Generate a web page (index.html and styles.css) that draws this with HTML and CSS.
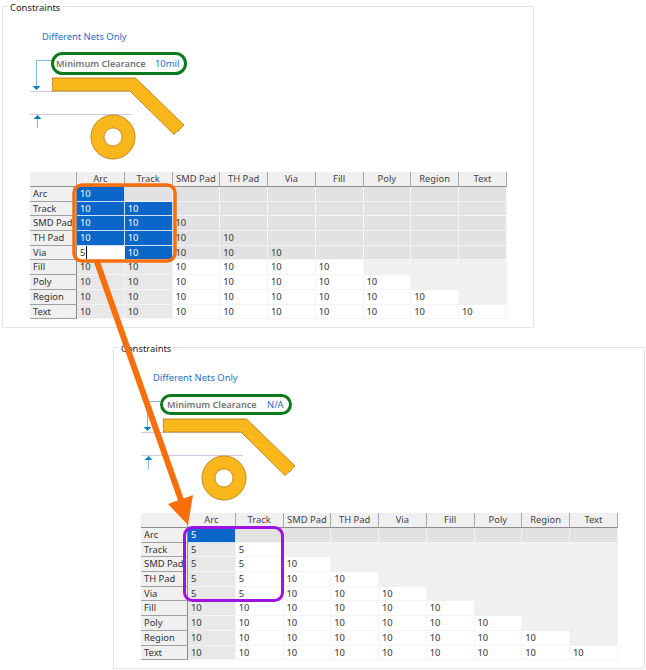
FILE: index.html
```html
<!DOCTYPE html>
<html lang="en">
<head>
    <meta charset="UTF-8">
    <title>Constraints</title>
    <link rel="stylesheet" href="styles.css">
</head>
<body>
    <svg class="defs" width="0" height="0">
        <symbol id="pcb" viewBox="30 14 170 158">
            <line class="gap" x1="30" y1="91.5" x2="131" y2="91.5"/>
            <line class="gap" x1="30" y1="114.5" x2="132" y2="114.5"/>
            <path class="lead" d="M52 60.5H36.5V87M37.5 118V128"/>
            <path class="head" d="M32.5 86H40.5L36.5 90Z M33.5 119H41.5L37.5 115Z"/>
            <path class="copper" d="M52 78H135.5L184 125L181 127.5L179.5 130L177 131.5L174 134.5L130 91H52L53 88L52 85L53 81Z"/>
            <path class="copper" fill-rule="evenodd" d="M113 115a22 22 0 1 0 .01 0Z M113 128a9 9 0 1 1 -.01 0Z"/>
        </symbol>
    </svg>

    <fieldset class="panel panel-before">
        <legend>Constraints</legend>
        <div class="panel-body">
            <svg class="diagram" width="170" height="158" viewBox="30 14 170 158">
                <use href="#pcb" x="30" y="14" width="170" height="158"/>
                <text class="nets" x="42" y="40">Different Nets Only</text>
                <text class="rule" x="56" y="66.5">Minimum Clearance</text>
                <text class="nets" x="155" y="67">10mil</text>
            </svg>
            <div class="grid">
                <div class="hd"></div><div class="hd">Arc</div><div class="hd">Track</div><div class="hd">SMD Pad</div><div class="hd">TH Pad</div><div class="hd">Via</div><div class="hd">Fill</div><div class="hd">Poly</div><div class="hd">Region</div><div class="hd">Text</div>

                <div class="rh">Arc</div><div class="c sel">10</div><div class="c dis"></div><div class="c dis"></div><div class="c dis"></div><div class="c dis"></div><div class="c dis"></div><div class="c dis"></div><div class="c dis"></div><div class="c dis"></div>
                <div class="rh">Track</div><div class="c sel">10</div><div class="c sel">10</div><div class="c dis"></div><div class="c dis"></div><div class="c dis"></div><div class="c dis"></div><div class="c dis"></div><div class="c dis"></div><div class="c dis"></div>
                <div class="rh">SMD Pad</div><div class="c sel">10</div><div class="c sel">10</div><div class="c dis">10</div><div class="c dis"></div><div class="c dis"></div><div class="c dis"></div><div class="c dis"></div><div class="c dis"></div><div class="c dis"></div>
                <div class="rh">TH Pad</div><div class="c sel">10</div><div class="c sel">10</div><div class="c dis">10</div><div class="c dis">10</div><div class="c dis"></div><div class="c dis"></div><div class="c dis"></div><div class="c dis"></div><div class="c dis"></div>
                <div class="rh">Via</div><div class="c val"><span class="caret">5</span></div><div class="c sel">10</div><div class="c dis">10</div><div class="c dis">10</div><div class="c dis">10</div><div class="c dis"></div><div class="c dis"></div><div class="c dis"></div><div class="c dis"></div>
                <div class="rh">Fill</div><div class="c ro">10</div><div class="c ro">10</div><div class="c val">10</div><div class="c val">10</div><div class="c val">10</div><div class="c val">10</div><div class="c off"></div><div class="c off"></div><div class="c off"></div>
                <div class="rh">Poly</div><div class="c ro">10</div><div class="c ro">10</div><div class="c val">10</div><div class="c val">10</div><div class="c val">10</div><div class="c val">10</div><div class="c val">10</div><div class="c off"></div><div class="c off"></div>
                <div class="rh">Region</div><div class="c ro">10</div><div class="c ro">10</div><div class="c val">10</div><div class="c val">10</div><div class="c val">10</div><div class="c val">10</div><div class="c val">10</div><div class="c val">10</div><div class="c off"></div>
                <div class="rh">Text</div><div class="c ro">10</div><div class="c ro">10</div><div class="c val">10</div><div class="c val">10</div><div class="c val">10</div><div class="c val">10</div><div class="c val">10</div><div class="c val">10</div><div class="c val">10</div>
            </div>
        </div>
    </fieldset>

    <fieldset class="panel panel-after">
        <legend>Constraints</legend>
        <div class="panel-body">
            <svg class="diagram" width="170" height="158" viewBox="30 14 170 158">
                <use href="#pcb" x="30" y="14" width="170" height="158"/>
                <text class="nets" x="42" y="40">Different Nets Only</text>
                <text class="rule" x="56" y="66.5">Minimum Clearance</text>
                <text class="nets" x="156" y="67">N/A</text>
            </svg>
            <div class="grid">
                <div class="hd"></div><div class="hd">Arc</div><div class="hd">Track</div><div class="hd">SMD Pad</div><div class="hd">TH Pad</div><div class="hd">Via</div><div class="hd">Fill</div><div class="hd">Poly</div><div class="hd">Region</div><div class="hd">Text</div>

                <div class="rh">Arc</div><div class="c sel">5</div><div class="c dis"></div><div class="c dis"></div><div class="c dis"></div><div class="c dis"></div><div class="c dis"></div><div class="c dis"></div><div class="c dis"></div><div class="c dis"></div>
                <div class="rh">Track</div><div class="c ro">5</div><div class="c val">5</div><div class="c off"></div><div class="c off"></div><div class="c off"></div><div class="c off"></div><div class="c off"></div><div class="c off"></div><div class="c off"></div>
                <div class="rh">SMD Pad</div><div class="c ro">5</div><div class="c val">5</div><div class="c val">10</div><div class="c off"></div><div class="c off"></div><div class="c off"></div><div class="c off"></div><div class="c off"></div><div class="c off"></div>
                <div class="rh">TH Pad</div><div class="c ro">5</div><div class="c val">5</div><div class="c val">10</div><div class="c val">10</div><div class="c off"></div><div class="c off"></div><div class="c off"></div><div class="c off"></div><div class="c off"></div>
                <div class="rh">Via</div><div class="c ro">5</div><div class="c val">5</div><div class="c val">10</div><div class="c val">10</div><div class="c val">10</div><div class="c off"></div><div class="c off"></div><div class="c off"></div><div class="c off"></div>
                <div class="rh">Fill</div><div class="c ro">10</div><div class="c val">10</div><div class="c val">10</div><div class="c val">10</div><div class="c val">10</div><div class="c val">10</div><div class="c off"></div><div class="c off"></div><div class="c off"></div>
                <div class="rh">Poly</div><div class="c ro">10</div><div class="c val">10</div><div class="c val">10</div><div class="c val">10</div><div class="c val">10</div><div class="c val">10</div><div class="c val">10</div><div class="c off"></div><div class="c off"></div>
                <div class="rh">Region</div><div class="c ro">10</div><div class="c val">10</div><div class="c val">10</div><div class="c val">10</div><div class="c val">10</div><div class="c val">10</div><div class="c val">10</div><div class="c val">10</div><div class="c off"></div>
                <div class="rh">Text</div><div class="c ro">10</div><div class="c val">10</div><div class="c val">10</div><div class="c val">10</div><div class="c val">10</div><div class="c val">10</div><div class="c val">10</div><div class="c val">10</div><div class="c val">10</div>
            </div>
        </div>
    </fieldset>

    <!-- callouts drawn over both screenshots -->
    <svg class="callouts" width="646" height="670" viewBox="0 0 646 670">
        <rect class="green" x="52.5" y="53.5" width="133" height="20" rx="10"/>
        <rect class="green" x="161.5" y="395.5" width="129" height="18" rx="9"/>
        <rect class="orange" x="74" y="185" width="101" height="76" rx="8"/>
        <path class="arrow" d="M97 262L181 500"/>
        <path class="arrow-head" d="M168 504L193 495L188 525Z"/>
        <rect class="purple" x="184.5" y="527.5" width="98" height="73" rx="8"/>
    </svg>
</body>
</html>
```

FILE: styles.css
```css
body {
    margin: 0;
    width: 646px;
    height: 670px;
    position: relative;
    overflow: hidden;
    background: white;
    font-family: "Noto Sans", sans-serif;
    font-size: 9.4px;
    color: #333;
}
.defs {
    position: absolute;
}
.panel {
    position: absolute;
    box-sizing: border-box;
    width: 532px;
    height: 328px;
    margin: 0;
    padding: 0;
    border: 1px solid #e2e2e2;
    border-radius: 2px;
    min-width: 0;
}
.panel-before {
    left: 2px;
    top: 0;
}
.panel-after {
    left: 113px;
    top: 341px;
}
.panel legend {
    margin-left: 5px;
    padding: 0 2px;
    height: 13px;
    line-height: 15px;
    color: #222;
}
.panel-body {
    padding-left: 27px;
}
.diagram {
    display: block;
    margin-top: 1px;
}
.gap {
    stroke: #d4c6e2;
    stroke-width: 1;
}
.lead {
    fill: none;
    stroke: #7db9d8;
    stroke-width: 1;
}
.head {
    fill: #0c7fb5;
}
.copper {
    fill: #f9b71b;
    stroke: #c08a24;
    stroke-width: 1;
}
.nets {
    fill: #2a6cc4;
    font-size: 9.4px;
}
.rule {
    fill: #757575;
    font-size: 9.2px;
    font-weight: 600;
}
.grid {
    display: grid;
    grid-template-columns: 47px repeat(9, 47.75px);
    grid-template-rows: 15px repeat(9, 14.7px);
    width: 477px;
}
.hd {
    box-sizing: border-box;
    background: #f0f0f0;
    border-right: 1px solid #a8a8a8;
    border-bottom: 1px solid #8c8c8c;
    text-align: center;
    line-height: 14px;
    color: #444;
    overflow: hidden;
    white-space: nowrap;
}
.rh {
    box-sizing: border-box;
    background: #f0f0f0;
    border-right: 1px solid #8c8c8c;
    border-bottom: 1px solid #a0a0a0;
    padding-left: 3px;
    line-height: 14px;
    color: #333;
    overflow: hidden;
    white-space: nowrap;
}
.c {
    box-sizing: border-box;
    padding-left: 3px;
    line-height: 14px;
    border-right: 1px solid #f4f4f4;
    border-bottom: 1px solid #f4f4f4;
}
.dis {
    background: #e2e2e2;
}
.off {
    background: #f0f0f0;
    border-color: #f0f0f0;
}
.ro {
    background: #e8e8e8;
}
.val {
    background: white;
}
.sel {
    background: #0a66c8;
    color: white;
    border-color: #cfe0f2;
}
.caret {
    border-right: 1px solid #111;
    padding-right: 1px;
}
.callouts {
    position: absolute;
    left: 0;
    top: 0;
    pointer-events: none;
}
.green {
    fill: none;
    stroke: #0b7a1e;
    stroke-width: 3;
}
.orange {
    fill: none;
    stroke: #f76e0a;
    stroke-width: 3.5;
}
.arrow {
    fill: none;
    stroke: #f76e0a;
    stroke-width: 6;
}
.arrow-head {
    fill: #f76e0a;
}
.purple {
    fill: none;
    stroke: #a012e0;
    stroke-width: 3;
}
```
